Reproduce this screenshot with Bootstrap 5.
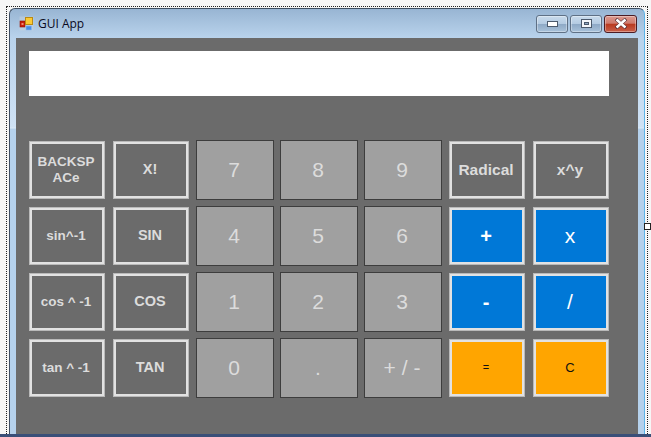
<!DOCTYPE html>
<html lang="en">

<head>
    <meta charset="UTF-8">
    <meta name="viewport" content="width=device-width, initial-scale=1.0">
    <title>GUI App</title>
    <link rel="stylesheet" href="https://cdn.jsdelivr.net/npm/bootstrap@5.3.0/dist/css/bootstrap.min.css">
    <script src="https://cdn.jsdelivr.net/npm/bootstrap@5.3.0/dist/js/bootstrap.bundle.min.js"></script>
    <style>
        html, body { height: 437px; overflow: hidden; }
        body { background: #f6f6f6; font-family: "Liberation Sans", Arial, sans-serif; position: relative; }

        /* designer surface */
        .surface { height: 434px; padding: 8px 6px 0 9px; }
        .strip-bottom { height: 3px; background: #3a4f78; }
        .select-dots { position: absolute; top: 6px; left: 6px; right: 3px; height: 428px; border: 1px dotted #222; border-bottom: 0; pointer-events: none; }
        .select-grip { position: absolute; left: 644px; top: 223px; width: 7px; height: 7px; background: #fff; border: 1px solid #222; }

        /* aero window */
        .win { height: 426px; border: 1px solid #3f4f63; border-bottom: 0; border-right-color: #5cb4e8; border-top-left-radius: 6px; border-top-right-radius: 6px;
            background: linear-gradient(180deg, #98b5d3 0, #b9d3ec 29px, #cfe2f5 118px, #dcebf8 119px, #b5d1ec 120px, #b5d1ec 100%); }
        .win-title { height: 29px; padding: 0 7px 0 9px; }
        .win-title-text { font-family: "Open Sans", "Noto Sans", sans-serif; font-size: 12px; color: #0a0a1e; margin-left: 4px; }
        .cap-row { column-gap: 2px; }
        .cap-btn { width: 32px; height: 18px; padding: 0; border: 1px solid #5f7186; border-radius: 3px; background: linear-gradient(180deg, #c9dbec 0, #b4cbe2 48%, #8ea9c6 52%, #a9c2da 100%); box-shadow: inset 0 0 0 1px rgba(255,255,255,.35); }
        .cap-close { width: 33px; border-color: #4b1c24; background: linear-gradient(180deg, #dc9a90 0, #cf7a6c 45%, #b93a20 52%, #c9604a 100%); }

        /* form client area */
        .client { height: 396px; margin: 0 6px; background: #6b6b6b; padding: 13px 0 0 12px; }
        .display { width: 580px; height: 45px; margin: 0 0 44px 1px; background: #fff; }
        .keys { display: grid; grid-template-columns: repeat(7, 78px); grid-auto-rows: 60px; gap: 6px; }
        .key { border-radius: 0; padding: 0 2px 0 0; line-height: 1.2; }
        .key-num, .key-num:hover { background: #a0a0a0; border: 1px solid #3d3d3d; color: #dcdcdc; font-size: 21px; }
        .key-fn, .key-fn:hover, .key-blue, .key-blue:hover, .key-orange, .key-orange:hover { margin: 1px; border: 1px solid #b9b9b9; box-shadow: inset 0 0 0 2px #e2e2e2; }
        .key-fn, .key-fn:hover { background: #6b6b6b; color: #dcdcdc; font-weight: 700; font-size: 13.5px; }
        .key-cap { font-size: 14.5px !important; }
        .key-wide { font-size: 15.5px !important; }
        .key-blue, .key-blue:hover { background: #0078d7; color: #fff; font-size: 20px; font-weight: 700; }
        .key-thin { font-size: 21px; font-weight: 400; }
        .key-orange, .key-orange:hover { background: #ffa500; color: #111; font-size: 11px; }
        .key-big { font-size: 13px; }
    </style>
</head>

<body>

    <div class="surface">
        <div class="win d-flex flex-column">
            <div class="win-title d-flex align-items-center">
                <!-- app icon -->
                <svg width="15" height="15" viewBox="0 0 15 15">
                    <rect x="0.5" y="0.5" width="14" height="14" fill="#c9d4df" opacity=".5"/>
                    <rect x="1" y="5" width="5" height="6" fill="#c81e0e" stroke="#8a1208" stroke-width=".6"/>
                    <rect x="2.5" y="7" width="2" height="2" fill="#f08a70"/>
                    <rect x="6.5" y="1.5" width="7" height="7" fill="#fbc934" stroke="#b98a12"/>
                    <rect x="7" y="10" width="5.5" height="4" fill="#4a8fe6" stroke="#8fb8ee" stroke-width=".6"/>
                </svg>
                <span class="win-title-text">GUI App</span>
                <div class="cap-row ms-auto d-flex">
                    <button class="cap-btn d-flex align-items-center justify-content-center">
                        <svg width="11" height="6" viewBox="0 0 11 6"><rect x=".5" y=".5" width="10" height="5" fill="#fff" stroke="#4c5a6c"/></svg>
                    </button>
                    <button class="cap-btn d-flex align-items-center justify-content-center">
                        <svg width="11" height="9" viewBox="0 0 11 9"><rect x=".5" y=".5" width="10" height="8" fill="#f4f7fa" stroke="#4c5a6c"/><rect x="3.5" y="3.5" width="4" height="2" fill="#8fa7c2" stroke="#4c5a6c"/></svg>
                    </button>
                    <button class="cap-btn cap-close d-flex align-items-center justify-content-center">
                        <svg width="14" height="11" viewBox="0 0 14 11"><path d="M2 1 12 10M12 1 2 10" fill="none" stroke="#47222a" stroke-width="3.6"/><path d="M2.5 1.5 11.5 9.5M11.5 1.5 2.5 9.5" fill="none" stroke="#fff" stroke-width="2.6"/></svg>
                    </button>
                </div>
            </div>

            <div class="client">
                <div class="display"></div>
                <div class="keys">
                    <button class="btn key key-fn">BACKSP<br>ACe</button>
                    <button class="btn key key-fn key-cap">X!</button>
                    <button class="btn key key-num">7</button>
                    <button class="btn key key-num">8</button>
                    <button class="btn key key-num">9</button>
                    <button class="btn key key-fn key-wide">Radical</button>
                    <button class="btn key key-fn key-wide">x^y</button>

                    <button class="btn key key-fn">sin^-1</button>
                    <button class="btn key key-fn key-cap">SIN</button>
                    <button class="btn key key-num">4</button>
                    <button class="btn key key-num">5</button>
                    <button class="btn key key-num">6</button>
                    <button class="btn key key-blue">+</button>
                    <button class="btn key key-blue key-thin">x</button>

                    <button class="btn key key-fn">cos ^ -1</button>
                    <button class="btn key key-fn key-cap">COS</button>
                    <button class="btn key key-num">1</button>
                    <button class="btn key key-num">2</button>
                    <button class="btn key key-num">3</button>
                    <button class="btn key key-blue">-</button>
                    <button class="btn key key-blue key-thin">/</button>

                    <button class="btn key key-fn">tan ^ -1</button>
                    <button class="btn key key-fn key-cap">TAN</button>
                    <button class="btn key key-num">0</button>
                    <button class="btn key key-num">.</button>
                    <button class="btn key key-num">+ / -</button>
                    <button class="btn key key-orange">=</button>
                    <button class="btn key key-orange key-big">C</button>
                </div>
            </div>
        </div>
    </div>
    <div class="strip-bottom"></div>

    <div class="select-dots"></div>
    <div class="select-grip"></div>

</body>

</html>
